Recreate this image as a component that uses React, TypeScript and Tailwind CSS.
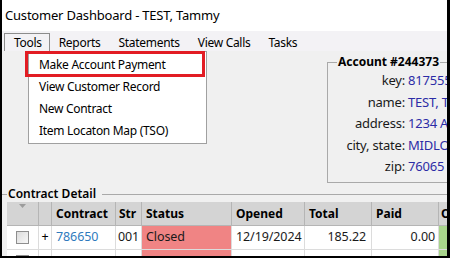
import React from "react";

const menu = ["Tools", "Reports", "Statements", "View Calls", "Tasks"];

const dropItems = [
  "Make Account Payment",
  "View Customer Record",
  "New Contract",
  "Item Locaton Map (TSO)",
];

const account = [
  { label: "key:", value: "817555" },
  { label: "name:", value: "TEST, Tammy" },
  { label: "address:", value: "1234 Any St" },
  { label: "city, state:", value: "MIDLOTHIAN, TX" },
  { label: "zip:", value: "76065" },
];

function Checkbox() {
  return (
    <div className="w-[13px] h-[13px] border border-[#8e8e8e] bg-gradient-to-br from-[#dcdcdc] to-[#f7f7f7]" />
  );
}

export default function App() {
  return (
    <div
      className="relative w-[450px] h-[258px] overflow-hidden bg-[#f0f0f0] border-l-2 border-r-[3px] border-b-2 border-black text-[12px] text-[#1a1a1a]"
      style={{ fontFamily: '"Noto Sans", "Open Sans", sans-serif' }}
    >
      {/* title bar */}
      <div className="h-[31px] bg-white flex items-center pl-[3px] text-[13px] tracking-[-0.2px] text-black">
        Customer Dashboard - TEST, Tammy
      </div>

      {/* menu bar */}
      <div className="h-[20px] bg-[#f3f2f5] flex items-end pl-[2px] text-[12px] tracking-[-0.3px] text-black">
        {menu.map((m, i) => (
          <div
            key={m}
            className={
              "h-[18px] flex items-center border border-b-0 " +
              (i === 0 ? "pl-[9px] pr-[7px] border-[#8c8c8c]" : "px-[8px] border-transparent")
            }
          >
            {m}
          </div>
        ))}
      </div>

      {/* dropdown */}
      <div className="absolute left-[26px] top-[51px] w-[179px] h-[93px] bg-white border border-[#a0a0a0] pt-[2px] text-[12px] tracking-[-0.3px] text-black z-10">
        {dropItems.map((d) => (
          <div key={d} className="h-[22px] flex items-center pl-[10px]">
            {d}
          </div>
        ))}
      </div>
      <div className="absolute left-[23px] top-[51px] w-[180px] h-[26px] border-[3px] border-[#e21c23] z-20" />

      {/* body */}
      <div className="pt-[3px]">
        <fieldset className="ml-[325px] w-[220px] border border-[#a9a9a9] pl-0 pb-[4px]">
          <legend className="ml-[9px] px-[1px] h-[16px] leading-[16px] font-bold text-[12px] text-black">
            Account #244373
          </legend>
          {account.map((r) => (
            <div key={r.label} className="h-[21.5px] flex items-center text-[13px] tracking-[-0.2px]">
              <div className="w-[77px] text-right text-[#1a1a1a] whitespace-nowrap">{r.label}</div>
              <div className="pl-[3px] text-[#2c2ca6] whitespace-nowrap">{r.value}</div>
            </div>
          ))}
        </fieldset>

        <fieldset className="mt-[3.5px] border-0 border-t border-[#a9a9a9] pl-[5px]">
          <legend className="pl-[1px] pr-[6px] h-[16px] leading-[16px] font-semibold text-[12px] text-black">
            Contract Detail
          </legend>
          <div className="flex flex-col bg-white w-[460px]">
            {/* header */}
            <div className="flex h-[24px] bg-[#d4d4d4] border-b border-[#b5b5b5] font-bold text-[12px] text-black">
              <div className="w-[32px] border-r border-[#b5b5b5] flex justify-center pt-[2px]">
                <svg width="7" height="4" viewBox="0 0 7 4">
                  <path d="M0 0 L7 0 L3.5 4 Z" fill="#9c9c9c" />
                </svg>
              </div>
              <div className="w-[13px] border-r border-[#b5b5b5]" />
              <div className="w-[64px] border-r border-[#b5b5b5] flex items-center pl-[4px]">Contract</div>
              <div className="w-[26px] border-r border-[#b5b5b5] flex items-center pl-[3px]">Str</div>
              <div className="w-[90px] border-r border-[#b5b5b5] flex items-center pl-[4px]">Status</div>
              <div className="w-[73px] border-r border-[#b5b5b5] flex items-center pl-[4px]">Opened</div>
              <div className="w-[67px] border-r border-[#b5b5b5] flex items-center pl-[4px]">Total</div>
              <div className="w-[67px] border-r border-[#b5b5b5] flex items-center pl-[4px]">Paid</div>
              <div className="flex-1 flex items-center pl-[2px]">Out</div>
            </div>
            {/* rows */}
            {[0, 1].map((r) => (
              <div key={r} className="flex h-[24px] border-b border-[#dcdcdc] text-[12.5px] tracking-[-0.1px]">
                <div className="w-[32px] border-r border-[#dcdcdc] flex items-center justify-center">
                  <Checkbox />
                </div>
                <div className="w-[13px] border-r border-[#dcdcdc] flex items-center justify-center text-black">
                  {r === 0 ? "+" : ""}
                </div>
                <div className="w-[64px] border-r border-[#dcdcdc] flex items-center pl-[4px] text-[#2f7bbd]">
                  {r === 0 ? "786650" : ""}
                </div>
                <div className="w-[26px] border-r border-[#dcdcdc] flex items-center pl-[2px]">
                  {r === 0 ? "001" : ""}
                </div>
                <div className="w-[90px] border-r border-[#dcdcdc] flex items-center pl-[4px] bg-[#f08484]">
                  {r === 0 ? "Closed" : ""}
                </div>
                <div className="w-[73px] border-r border-[#dcdcdc] flex items-center pl-[4px]">
                  {r === 0 ? "12/19/2024" : ""}
                </div>
                <div className="w-[67px] border-r border-[#dcdcdc] flex items-center justify-end pr-[5px]">
                  {r === 0 ? "185.22" : ""}
                </div>
                <div className="w-[67px] border-r border-[#dcdcdc] flex items-center justify-end pr-[3px]">
                  {r === 0 ? "0.00" : ""}
                </div>
                <div className="flex-1 bg-[#a8d48c]" />
              </div>
            ))}
          </div>
        </fieldset>
      </div>
    </div>
  );
}
